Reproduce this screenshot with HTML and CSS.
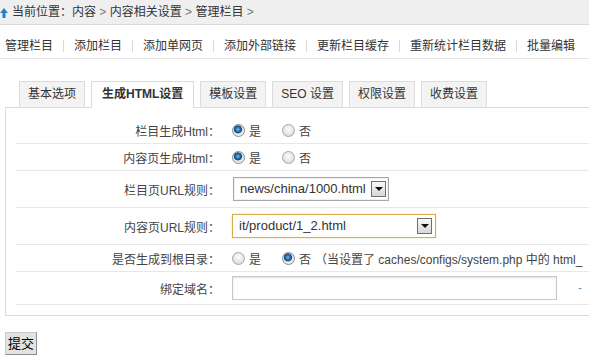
FILE: index.html
```html
<!DOCTYPE html>
<html lang="zh-CN">
<head>
<meta charset="utf-8">
<title>管理栏目</title>
<link rel="stylesheet" href="styles.css">
</head>
<body>
<div class="topbar">
  <svg class="home-ico" width="8" height="10" viewBox="0 0 8 10"><polygon points="4,0 8,5 5.5,5 5.5,10 2.5,10 2.5,5 0,5" fill="#2b7fc9"/></svg>
  <span class="crumb">当前位置：内容 <i>&gt;</i> 内容相关设置 <i>&gt;</i> 管理栏目 <i>&gt;</i></span>
</div>
<div class="subnav">
  <a>管理栏目</a><span class="sep"></span>
  <a>添加栏目</a><span class="sep"></span>
  <a>添加单网页</a><span class="sep"></span>
  <a>添加外部链接</a><span class="sep"></span>
  <a>更新栏目缓存</a><span class="sep"></span>
  <a>重新统计栏目数据</a><span class="sep"></span>
  <a>批量编辑</a>
</div>
<div class="tabs">
  <span class="tab">基本选项</span>
  <span class="tab on">生成HTML设置</span>
  <span class="tab">模板设置</span>
  <span class="tab">SEO 设置</span>
  <span class="tab">权限设置</span>
  <span class="tab">收费设置</span>
</div>
<div class="panel">
  <div class="row row-s">
    <div class="label">栏目生成Html：</div>
    <div class="value"><span class="radio checked"></span><span class="opt">是</span><span class="radio"></span><span class="opt">否</span></div>
  </div>
  <div class="row row-s">
    <div class="label">内容页生成Html：</div>
    <div class="value"><span class="radio checked"></span><span class="opt">是</span><span class="radio"></span><span class="opt">否</span></div>
  </div>
  <div class="row row-l">
    <div class="label">栏目页URL规则：</div>
    <div class="value"><div class="select sel-a"><span class="sel-text">news/china/1000.html</span><span class="sel-btn"></span></div></div>
  </div>
  <div class="row row-l">
    <div class="label">内容页URL规则：</div>
    <div class="value"><div class="select sel-b"><span class="sel-text">it/product/1_2.html</span><span class="sel-btn"></span></div></div>
  </div>
  <div class="row row-s">
    <div class="label">是否生成到根目录：</div>
    <div class="value"><span class="radio"></span><span class="opt">是</span><span class="radio checked"></span><span class="opt">否</span><span class="note">（当设置了 caches/configs/system.php 中的 html_</span></div>
  </div>
  <div class="row row-m">
    <div class="label">绑定域名：</div>
    <div class="value"><span class="input"></span><span class="dash">-</span></div>
  </div>
</div>
<div class="actions"><button class="btn" type="button">提交</button></div>
</body>
</html>
```
FILE: styles.css
```css
html, body {
  margin: 0;
  padding: 0;
  overflow: hidden;
  background: #fff;
}
body {
  font-family: "Liberation Sans", "Noto Sans CJK SC", sans-serif;
  font-size: 12px;
  color: #333;
  width: 589px;
}
.topbar {
  height: 24px;
  line-height: 24px;
  background: #efefef;
  border-bottom: 1px solid #dadada;
  display: flex;
  align-items: center;
  padding-left: 0;
}
.home-ico {
  display: block;
  margin-right: 4px;
  margin-top: 1px;
}
.crumb i {
  font-style: normal;
  color: #777;
}
.subnav {
  display: flex;
  align-items: center;
  padding: 13px 0 4px 5px;
  line-height: 16px;
  border-bottom: 1px solid #e4e4e4;
  white-space: nowrap;
}
.subnav a {
  color: #333;
}
.subnav .sep {
  width: 1px;
  height: 12px;
  background: #d9d9d9;
  margin: 0 10px 0 10px;
}
.tabs {
  display: flex;
  gap: 6px;
  margin: 22px 0 0 19px;
  position: relative;
  z-index: 1;
  height: 27px;
}
.tab {
  height: 25px;
  line-height: 25px;
  padding: 0 8px;
  background: #f3f3f3;
  border: 1px solid #dcdcdc;
  border-bottom: none;
  color: #333;
  white-space: nowrap;
}
.tab.on {
  background: #fff;
  font-weight: bold;
  height: 26px;
  padding: 0 10px;
}
.panel {
  margin-left: 5px;
  margin-top: -1px;
  width: 640px;
  border: 1px solid #dcdcdc;
  padding: 9px 0 10px 10px;
}
.row {
  display: flex;
  align-items: center;
  border-bottom: 1px solid #e8e8e8;
  white-space: nowrap;
}
.row-s { height: 26px; }
.row-l { height: 36px; }
.row-m { height: 32px; }
.label {
  flex: none;
  width: 204px;
  text-align: right;
  color: #444;
}
.value {
  display: flex;
  align-items: center;
  padding-left: 12px;
  color: #444;
}
.radio {
  width: 11px;
  height: 11px;
  border-radius: 50%;
  border: 1px solid #a6a6a6;
  background: radial-gradient(circle at 50% 40%, #fdfdfd 0%, #e6e6e6 55%, #cfcfcf 100%);
  margin-right: 4px;
  flex: none;
}
.radio.checked {
  border-color: #8a8a8a;
  background: radial-gradient(circle at 45% 40%, #7fc0ec 0, #2a78b8 22%, #14497c 42%, #dcdcdc 48%, #f4f4f4 75%, #d4d4d4 100%);
}
.opt {
  margin-right: 21px;
}
.note {
  margin-left: -17px;
  color: #444;
}
.select {
  display: flex;
  align-items: center;
  height: 22px;
  border: 1px solid #a7a7a7;
  background: #fff;
  box-shadow: inset 0 0 0 1px #f0f0f0;
  font-size: 13px;
  color: #333;
}
.sel-a { width: 154px; margin-left: 1px; }
.sel-b {
  width: 202px;
  border-color: #d9ac4a;
  box-shadow: 0 0 2px #f3dfa0;
}
.sel-text {
  flex: 1;
  padding-left: 6px;
  line-height: 22px;
}
.sel-btn {
  flex: none;
  width: 13px;
  height: 14px;
  margin-right: 2px;
  border: 1px solid #6f6f6f;
  background: linear-gradient(#fafafa, #d6d6d6);
  position: relative;
}
.sel-btn::after {
  content: "";
  position: absolute;
  left: 3px;
  top: 5px;
  border-left: 4px solid transparent;
  border-right: 4px solid transparent;
  border-top: 4px solid #111;
}
.sel-b .sel-btn { margin-right: 3px; }
.input {
  display: block;
  width: 323px;
  height: 22px;
  border: 1px solid #c8c8c8;
  box-shadow: inset 0 1px 2px #e0e0e0;
  background: #fff;
}
.dash {
  margin-left: 21px;
  color: #4d9ad6;
}
.actions {
  padding: 16px 0 0 5px;
}
.btn {
  font-family: "Liberation Sans", "Noto Sans CJK SC", sans-serif;
  font-size: 13px;
  height: 23px;
  line-height: 19px;
  padding: 0 2px;
  margin: 0;
  color: #000;
  background: #e3e3e3;
  border: 1px solid #8e8e8e;
  border-top-color: #c8c8c8;
  border-left-color: #c8c8c8;
  border-radius: 0;
}
```
